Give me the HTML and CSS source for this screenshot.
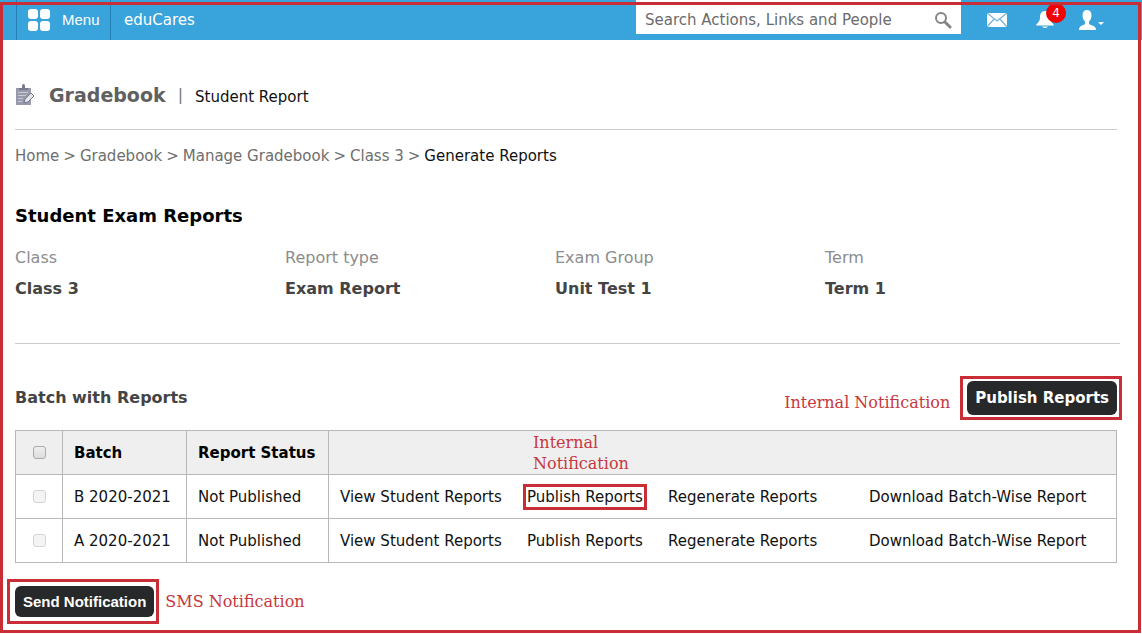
FILE: index.html
```html
<!DOCTYPE html>
<html lang="en">
<head>
<meta charset="utf-8">
<title>Gradebook - Student Report</title>
<link rel="stylesheet" href="styles.css">
</head>
<body>
<div class="page">
  <header class="topbar">
    <button class="menu" type="button">
      <svg width="24" height="24" viewBox="0 0 24 24" fill="#fff" aria-hidden="true"><rect x="1" y="1" width="10" height="10" rx="3"/><rect x="13" y="1" width="10" height="10" rx="3"/><rect x="1" y="13" width="10" height="10" rx="3"/><rect x="13" y="13" width="10" height="10" rx="3"/></svg>
      <span>Menu</span>
    </button>
    <a class="brand" href="#">eduCares</a>
    <form class="search">
      <input class="search-input" type="text" placeholder="Search Actions, Links and People" aria-label="Search Actions, Links and People">
      <button class="search-button" type="button" aria-label="Search">
        <svg width="18" height="18" viewBox="0 0 18 18" fill="none" stroke="#858585"><circle cx="7" cy="7" r="5" stroke-width="2"/><path d="M11 11l5 5" stroke-width="3" stroke-linecap="round"/></svg>
      </button>
    </form>
    <nav class="tools">
      <a href="#" aria-label="Messages"><svg width="20" height="14" viewBox="0 0 20 14"><rect width="20" height="14" fill="#fff"/><path d="M0 0l10 8 10-8M0 14l7-8M20 14l-7-8" fill="none" stroke="#75b4d8" stroke-width="1.3"/></svg></a>
      <a class="bell" href="#" aria-label="Notifications"><svg width="18" height="18" viewBox="0 0 18 18" fill="#fff"><path d="M9 0C5 0 4 3 4 6.500C4 11 1 12 0 14.500H18C17 12 14 11 14 6.500C14 3 13 0 9 0zM6 15.500h6q-3 3-6 0z"/></svg><span class="badge">4</span></a>
      <a href="#" aria-label="Account"><svg width="28" height="20" viewBox="0 0 28 20" fill="#fff"><path d="M9 0C6 0 4.500 2 4.500 5.500C4.500 8 5.500 10 7 11.500V14C6 15.500 1 15 1 20H18C18 15 12 15.500 11 14V11.500C12.500 10 13.500 8 13.500 5.500C13.500 2 12 0 9 0zM20 12h6l-3 3z"/></svg></a>
    </nav>
  </header>

  <main class="content">
    <div class="title-row">
      <svg class="title-icon" width="20" height="22" viewBox="0 0 20 22"><path d="M1 4h15v17H1z" fill="#989aab"/><path d="M4 6V4h3V2q0-2 1.500-2T10 2v2h3v2z" fill="#777a8c"/><path d="M3 8.500h10M3 11.500h8M3 14.500h5M3 17.500h4" stroke="#c9cad4"/><path d="M9 19l1-4 6-6 3 3-6 6z" fill="#e4e4ec" stroke="#737687"/></svg>
      <h1 class="title">Gradebook</h1>
      <span class="divider">|</span>
      <span class="subtitle">Student Report</span>
    </div>
    <nav class="crumbs">
      <a href="#">Home</a><span>&gt;</span><a href="#">Gradebook</a><span>&gt;</span><a href="#">Manage Gradebook</a><span>&gt;</span><a href="#">Class 3</a><span>&gt;</span><span class="current">Generate Reports</span>
    </nav>

    <h2 class="section-title">Student Exam Reports</h2>
    <dl class="facts">
      <div><dt>Class</dt><dd>Class 3</dd></div>
      <div><dt>Report type</dt><dd>Exam Report</dd></div>
      <div><dt>Exam Group</dt><dd>Unit Test 1</dd></div>
      <div><dt>Term</dt><dd>Term 1</dd></div>
    </dl>

    <div class="batch-head">
      <h3 class="batch-title">Batch with Reports</h3>
      <span class="note">Internal Notification</span>
      <div class="callout callout-publish"><button class="button publish" type="button">Publish Reports</button></div>
    </div>

    <table class="batches">
      <colgroup><col class="col-check"><col class="col-batch"><col class="col-status"><col></colgroup>
      <thead>
        <tr>
          <th class="check"><input type="checkbox" aria-label="Select all batches"></th>
          <th>Batch</th><th>Report Status</th>
          <th><div class="actions"><span class="note note-column">Internal Notification</span></div></th>
        </tr>
      </thead>
      <tbody>
        <tr>
          <td class="check"><input type="checkbox" aria-label="Select B 2020-2021" disabled></td>
          <td>B 2020-2021</td><td>Not Published</td>
          <td><div class="actions"><a href="#">View Student Reports</a><a class="marked" href="#">Publish Reports</a><a href="#">Regenerate Reports</a><a href="#">Download Batch-Wise Report</a></div></td>
        </tr>
        <tr>
          <td class="check"><input type="checkbox" aria-label="Select A 2020-2021" disabled></td>
          <td>A 2020-2021</td><td>Not Published</td>
          <td><div class="actions"><a href="#">View Student Reports</a><a href="#">Publish Reports</a><a href="#">Regenerate Reports</a><a href="#">Download Batch-Wise Report</a></div></td>
        </tr>
      </tbody>
    </table>

    <div class="send-row">
      <div class="callout callout-send"><button class="button send" type="button">Send Notification</button></div>
      <span class="note">SMS Notification</span>
    </div>
  </main>
  <div class="frame"></div>
</div>
</body>
</html>
```

FILE: styles.css
```css
* { box-sizing: border-box; }
body {
  margin: 0;
  background: #fff;
  color: #111;
  font: 15px/20px "DejaVu Sans", Verdana, sans-serif;
}
a { color: inherit; text-decoration: none; }
h1, h2, h3, dl, dd { margin: 0; }
button { font: inherit; cursor: pointer; }
svg { display: block; }

.page { position: relative; min-height: 100vh; }
.frame {
  position: absolute;
  inset: 2px 1px 1px 0;
  border: 3px solid #c92d36;
  pointer-events: none;
}

.topbar {
  display: flex;
  align-items: center;
  height: 40px;
  padding-left: 16px;
  background: #39a3dc;
  color: #fff;
}
.menu {
  display: flex;
  align-items: center;
  gap: 11px;
  height: 40px;
  width: 95px;
  padding: 0 0 0 10px;
  border: solid #2480b4;
  border-width: 0 1px;
  background: none;
  color: #fff;
  font: 15px/20px "Liberation Sans", Arial, sans-serif;
}
.brand { margin-left: 13px; }
.search {
  display: flex;
  align-items: center;
  width: 325px;
  height: 34px;
  margin-left: auto;
  margin-bottom: 6px;
  padding-top: 6px;
  background: #fff;
}
.search-input {
  flex: 1;
  min-width: 0;
  border: 0;
  outline: 0;
  padding: 0 0 0 9px;
  background: none;
  color: #666;
  font: inherit;
}
.search-input::placeholder { color: #6b6b6b; opacity: 1; }
.search-button { padding: 0 9px; border: 0; background: none; }
.tools {
  display: flex;
  align-items: center;
  gap: 29px;
  padding: 0 36px 0 26px;
}
.bell { position: relative; }
.badge {
  position: absolute;
  left: 10px;
  top: -8px;
  width: 20px;
  height: 20px;
  border-radius: 50%;
  background: #f00000;
  font-size: 12px;
  text-align: center;
}
.tools a + a + a { margin-left: -5px; }

.content { padding: 40px 25px 10px 15px; }
.title-row {
  display: flex;
  align-items: center;
  height: 50px;
  padding-bottom: 20px;
  margin-bottom: 16px;
  padding-top: 0;
  border-bottom: 1px solid #ccc;
}
.title-icon { margin-right: 14px; }
.title { color: #606060; font-size: 19px; line-height: 28px; }
.divider { margin: 0 12px; color: #777; font-size: 16px; }
.subtitle { padding-top: 4px; }

.crumbs { display: flex; flex-wrap: wrap; gap: 4px; color: #6e6e6e; }
.crumbs .current { color: #111; }
.section-title { margin: 38px 0 20px; color: #000; font-size: 18px; line-height: 24px; }
.facts {
  display: grid;
  grid-template-columns: repeat(3, 270px) 1fr;
  margin-right: -3px;
  padding-bottom: 44px;
  border-bottom: 1px solid #ccc;
  font-size: 16px;
}
.facts dt { margin-bottom: 11px; color: #8c8c8c; }
.facts dd { color: #444; font-weight: bold; }

.batch-head { display: flex; align-items: center; margin: 32px -5px 10px 0; }
.batch-head .note { padding-top: 8px; }
.batch-title { margin-right: auto; color: #444; font-size: 16px; }
.note {
  color: #c6383d;
  font: 16px/21px "DejaVu Serif", serif;
}
.button {
  display: block;
  border: 0;
  border-radius: 6px;
  background: #262829;
  color: #fff;
  font-weight: bold;
  white-space: nowrap;
}
.callout { border: 3px solid #c92d36; }
.callout-publish { margin-left: 10px; padding: 2px 2px 2px 4px; }
.callout-send { padding: 4px 2px 4px 5px; }
.publish { height: 34px; padding: 0 8px; }

.batches { width: 100%; border-collapse: collapse; table-layout: fixed; }
.batches th, .batches td {
  height: 44px;
  padding: 0 11px;
  border: 1px solid #b8b8b8;
  text-align: left;
  white-space: nowrap;
}
.batches th { background: #efefef; color: #000; }
.batches .check { padding: 0; text-align: center; }
.col-check { width: 47px; }
.col-batch { width: 124px; }
.col-status { width: 142px; }
.check input {
  appearance: none;
  display: block;
  width: 13px;
  height: 13px;
  margin: 0 auto;
  border: 1px solid #aaa;
  border-radius: 3px;
  background: linear-gradient(#eee, #ddd);
}
.check input:disabled { border-color: #d4d4d4; background: #f4f4f4; }
.actions { display: grid; grid-template-columns: 187px 141px 201px 1fr; }
.actions a { justify-self: start; line-height: 18px; }
.marked { outline: 3px solid #c92d36; outline-offset: 1px; }
.batches .note { grid-column: 2; padding-left: 6px; white-space: normal; }

.send-row { display: flex; align-items: center; gap: 6px; margin: 16px 0 0 -8px; }
.send {
  height: 31px;
  padding: 0 8px;
  font-family: "Liberation Sans", Arial, sans-serif;
}
```
